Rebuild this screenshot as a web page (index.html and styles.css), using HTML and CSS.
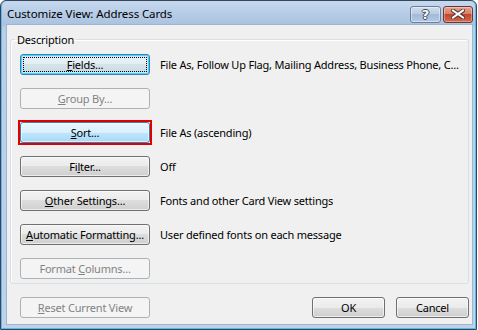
FILE: index.html
```html
<!DOCTYPE html>
<html lang="en">
<head>
    <meta charset="UTF-8">
    <title>Customize View: Address Cards</title>
    <link rel="stylesheet" href="styles.css">
</head>
<body>
    <div class="window">
        <div class="titlebar">
            <span class="title">Customize View: Address Cards</span>
            <div class="caption">
                <span class="cap-btn cap-help"><span class="help-mark">?</span></span>
                <span class="cap-btn cap-close">
                    <svg width="14" height="10" viewBox="0 0 14 10">
                        <path d="M2 1.5 L12 8.5 M12 1.5 L2 8.5" stroke="#4a3a38" stroke-width="4" stroke-linecap="square"/>
                        <path d="M2 1.5 L12 8.5 M12 1.5 L2 8.5" stroke="#ffffff" stroke-width="2" stroke-linecap="square"/>
                    </svg>
                </span>
            </div>
        </div>
        <div class="client">
            <fieldset class="group">
                <legend>Description</legend>
                <div class="row">
                    <button class="btn btn-focus"><u>F</u>ields...</button>
                    <span class="desc">File As, Follow Up Flag, Mailing Address, Business Phone, C...</span>
                </div>
                <div class="row">
                    <button class="btn" disabled><u>G</u>roup By...</button>
                </div>
                <div class="row">
                    <button class="btn btn-hot"><u>S</u>ort...</button>
                    <span class="desc">File As (ascending)</span>
                </div>
                <div class="row">
                    <button class="btn">Fi<u>l</u>ter...</button>
                    <span class="desc">Off</span>
                </div>
                <div class="row">
                    <button class="btn"><u>O</u>ther Settings...</button>
                    <span class="desc">Fonts and other Card View settings</span>
                </div>
                <div class="row">
                    <button class="btn"><u>A</u>utomatic Formatting...</button>
                    <span class="desc">User defined fonts on each message</span>
                </div>
                <div class="row">
                    <button class="btn" disabled>Format <u>C</u>olumns...</button>
                </div>
            </fieldset>
            <div class="footer">
                <button class="btn" disabled><u>R</u>eset Current View</button>
                <div class="footer-right">
                    <button class="btn btn-small">OK</button>
                    <button class="btn btn-small">Cancel</button>
                </div>
            </div>
        </div>
    </div>
</body>
</html>
```

FILE: styles.css
```css
body {
    margin: 0;
    background: #ffffff;
    font-family: 'Noto Sans', 'Open Sans', sans-serif;
    font-size: 11px;
    letter-spacing: -0.2px;
    color: #000;
}
.window {
    width: 477px;
    height: 330px;
    box-sizing: border-box;
    border: 1px solid #34465c;
    border-radius: 6px 6px 0 0;
    background: linear-gradient(#c6d8ee 0px, #a9c2df 24px, #b9cfe8 26px, #bed3ea 100%);
    box-shadow: inset 0 -1px 0 #4fbfe8, inset 1px 0 0 #6fb4e0, inset -1px 0 0 #4fbfe8;
    padding: 0 4px 5px 6px;
    display: flex;
    flex-direction: column;
}
.titlebar {
    height: 24px;
    display: flex;
    align-items: center;
    justify-content: space-between;
    flex-shrink: 0;
}
.title {
    font-size: 11.5px;
    letter-spacing: -0.1px;
    color: #000;
    padding-top: 1px;
}
.caption {
    display: flex;
    gap: 2px;
    margin-top: 2px;
    margin-right: -1px;
}
.cap-btn {
    height: 17px;
    box-sizing: border-box;
    border: 1px solid #6d7f97;
    border-radius: 3px;
    display: flex;
    align-items: center;
    justify-content: center;
}
.cap-help {
    width: 31px;
    background: linear-gradient(#cfdcec 0%, #b8cbe2 50%, #a3badb 50%, #b3c8e3 100%);
    box-shadow: inset 0 0 0 1px rgba(255, 255, 255, 0.45);
}
.help-mark {
    font-family: 'DejaVu Sans', sans-serif;
    font-weight: bold;
    font-size: 13px;
    line-height: 13px;
    color: #fff;
    text-shadow: 1px 0 0 #3d4656, -1px 0 0 #3d4656, 0 1px 0 #3d4656, 0 -1px 0 #3d4656;
}
.cap-close {
    width: 30px;
    border-color: #6b3530;
    background: linear-gradient(#e4a493 0%, #d47b64 50%, #c2452d 50%, #d46a4e 100%);
    box-shadow: inset 0 0 0 1px rgba(255, 255, 255, 0.35);
}
.client {
    flex: 1;
    background: #f0f0f0;
    box-shadow: 0 0 0 1px #9fb6d2;
    display: flex;
    flex-direction: column;
}
.group {
    margin: 7px 3px 0 3px;
    padding: 7px 9px 4px 9px;
    border: 1px solid #d5dfe5;
    border-radius: 3px;
    box-shadow: inset 1px 1px 0 #fff;
}
.group legend {
    padding: 0 2px;
    margin-left: -5px;
    line-height: 15px;
}
.row {
    display: flex;
    align-items: center;
    gap: 10px;
    height: 21px;
    margin-bottom: 13px;
}
.row:last-child {
    margin-bottom: 0;
}
.btn {
    width: 130px;
    height: 21px;
    padding: 0;
    border: 1px solid #707070;
    border-radius: 3px;
    background: linear-gradient(#f2f2f2 0%, #ebebeb 50%, #dddddd 50%, #cfcfcf 100%);
    box-shadow: inset 0 0 0 1px rgba(255, 255, 255, 0.6);
    font-family: inherit;
    font-size: 11px;
    letter-spacing: -0.2px;
    line-height: 17px;
    white-space: nowrap;
    color: #000;
    position: relative;
}
.btn:disabled {
    border-color: #adb2b5;
    background: #f4f4f4;
    box-shadow: none;
    color: #838383;
}
.btn-focus {
    border-color: #3c7fb1;
    box-shadow: inset 0 0 0 1px #48d2ff, inset 0 0 0 2px #c2ecfb;
    background: linear-gradient(#ebf3f7 0%, #e3edf2 50%, #d6e3ea 50%, #cbdbe4 100%);
}
.btn-focus::after {
    content: '';
    position: absolute;
    inset: 2px;
    border: 1px dotted #000;
}
.btn-hot {
    border-color: #3c7fb1;
    background: linear-gradient(#eaf6fd 0%, #d9f0fc 50%, #bee6fd 50%, #a7d9f5 100%);
}
.btn-hot::before {
    content: '';
    position: absolute;
    inset: -3px -3px -3px -3px;
    border: 2px solid #e00000;
}
.desc {
    white-space: nowrap;
}
.footer {
    display: flex;
    justify-content: space-between;
    margin-top: 13px;
    padding: 0 3px 0 13px;
}
.footer-right {
    display: flex;
    gap: 11px;
}
.btn-small {
    width: 73px;
}
```
